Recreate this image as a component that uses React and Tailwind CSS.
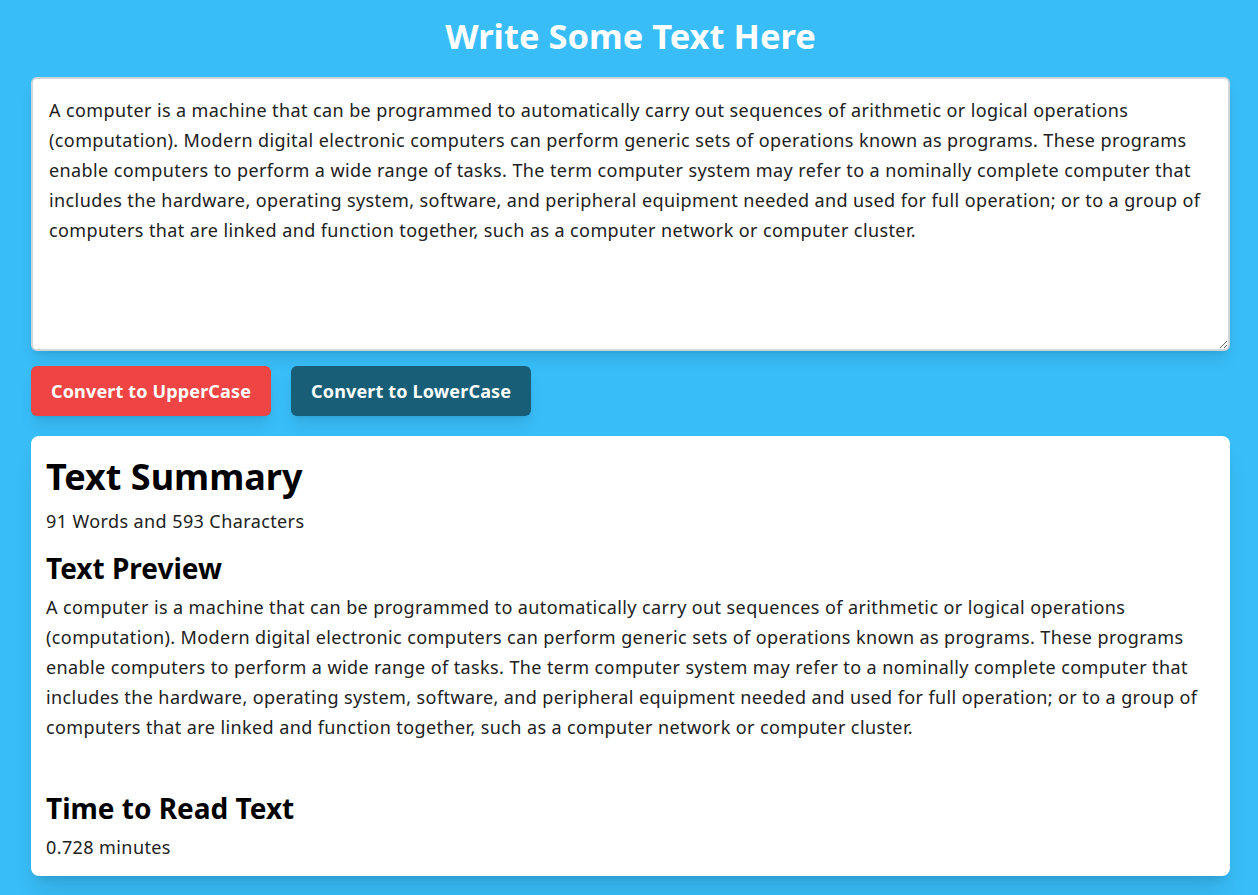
import { useState } from "react";

const SAMPLE =
  "A computer is a machine that can be programmed to automatically carry out sequences of arithmetic or logical operations (computation). Modern digital electronic computers can perform generic sets of operations known as programs. These programs enable computers to perform a wide range of tasks. The term computer system may refer to a nominally complete computer that includes the hardware, operating system, software, and peripheral equipment needed and used for full operation; or to a group of computers that are linked and function together, such as a computer network or computer cluster.";

export default function App() {
  const [text, setText] = useState(SAMPLE);

  const words = text.split(/\s+/).filter((w) => w.length > 0).length;

  return (
    <div className="min-h-screen bg-[#38bdf8] pb-4 pl-[31px] pr-[28px] pt-4 font-['Segoe_UI','Noto_Sans',sans-serif] text-[#212121]">
      <h1 className="mb-[21px] text-center text-[34.5px] font-bold leading-10 text-white">
        Write Some Text Here
      </h1>

      <textarea
        value={text}
        onChange={(e) => setText(e.target.value)}
        className="block h-[274px] w-full rounded-md border-2 border-gray-300 bg-white px-4 py-4 text-lg leading-[30px] tracking-[0.4px] text-[#212121] shadow-lg outline-none"
      />

      <div className="mt-[15px] flex gap-5">
        <button
          onClick={() => setText(text.toUpperCase())}
          className="h-[50px] rounded-md bg-[#ef4444] px-5 text-lg font-bold tracking-[0.15px] text-white shadow-lg"
        >
          Convert to UpperCase
        </button>
        <button
          onClick={() => setText(text.toLowerCase())}
          className="h-[50px] rounded-md bg-[#185e77] px-5 text-lg font-bold tracking-[0.15px] text-white shadow-lg"
        >
          Convert to LowerCase
        </button>
      </div>

      <div className="mt-5 rounded-lg bg-white px-[15px] pb-[15px] pt-[21px] shadow-xl">
        <h2 className="text-4xl font-bold leading-10 text-black">Text Summary</h2>
        <p className="mt-[11px] text-lg leading-[27px] tracking-[0.4px]">
          {words} Words and {text.length} Characters
        </p>
        <h3 className="mt-[15px] text-[28px] font-bold leading-9 text-black">Text Preview</h3>
        <p className="mt-[6px] text-lg leading-[30px] tracking-[0.4px]">{text}</p>
        <h3 className="mt-12 text-[28px] font-bold leading-9 text-black">Time to Read Text</h3>
        <p className="mt-2 text-lg leading-[27px] tracking-[0.4px]">
          {(0.008 * words).toFixed(3)} minutes
        </p>
      </div>
    </div>
  );
}
